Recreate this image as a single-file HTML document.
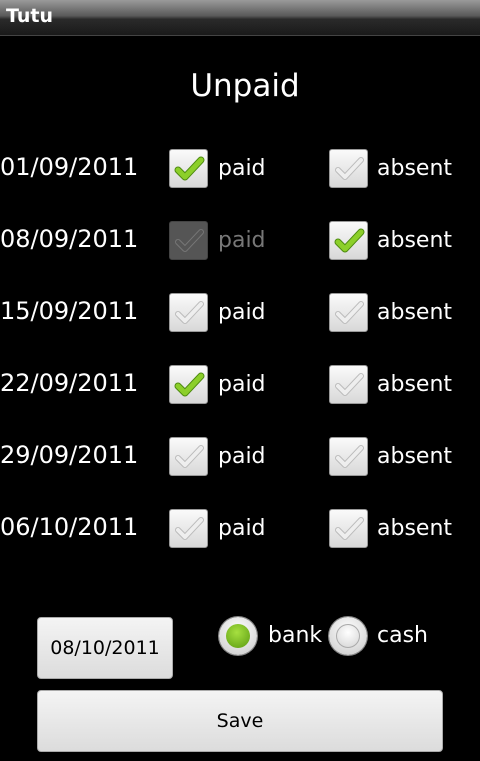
<!DOCTYPE html>
<html><head><meta charset="utf-8"><style>
body{margin:0;width:480px;height:761px;background:#000;position:relative;overflow:hidden;font-family:"DejaVu Sans","Liberation Sans",sans-serif;color:#fff}
.bar{position:absolute;left:0;top:0;width:480px;height:35px;background:linear-gradient(#9a9a9a,#5a5a5a 45%,#2a2a2a 55%,#1a1a1a);border-bottom:1px solid #444}
.bar span{position:absolute;left:6px;top:5px;font-weight:bold;font-size:19px}
.t{position:absolute;white-space:nowrap}
.cb{position:absolute;width:37px;height:37px;border:1px solid #999;border-radius:3px;background:linear-gradient(#fafafa,#d8d8d8)}
.cb.dis{background:#555;border-color:#444}
.cb svg{position:absolute;left:0;top:0}
.btn{position:absolute;border-radius:4px;background:linear-gradient(#f4f4f4,#dcdcdc);border:1px solid #aaa;color:#000;text-align:center}
.rad{position:absolute;width:38px;height:38px;border-radius:50%;background:radial-gradient(circle at 50% 35%,#fff,#c8c8c8);box-shadow:0 0 0 1px #888}
.rad i{position:absolute;left:7px;top:7px;width:24px;height:24px;border-radius:50%}
</style></head><body>
<div class="bar"><span>Tutu</span></div>
<div class="t" style="left:0;width:490px;text-align:center;top:68px;font-size:31px">Unpaid</div>
<div id="rows"></div>
<script>
var rows=[["01/09/2011","on","off"],["08/09/2011","dis","on"],["15/09/2011","off","off"],["22/09/2011","on","off"],["29/09/2011","off","off"],["06/10/2011","off","off"]];
function cb(x,y,s){var path='M8 20 L15 27 L31 10';var svg;
if(s=="on")svg='<svg width="37" height="37"><path d="'+path+'" stroke="#4d8a10" stroke-width="7" fill="none" stroke-linecap="round" stroke-linejoin="round"/><path d="'+path+'" stroke="#8ccf2a" stroke-width="5" fill="none" stroke-linecap="round" stroke-linejoin="round"/></svg>';
else svg='<svg width="37" height="37"><path d="'+path+'" stroke="'+(s=="dis"?"#777":"#bbb")+'" stroke-width="6" fill="none" stroke-linecap="round" stroke-linejoin="round"/><path d="'+path+'" stroke="'+(s=="dis"?"#555":"#eee")+'" stroke-width="4" fill="none" stroke-linecap="round" stroke-linejoin="round"/></svg>';
return '<div class="cb'+(s=="dis"?" dis":"")+'" style="left:'+x+'px;top:'+y+'px">'+svg+'</div>';}
var h='';rows.forEach(function(r,i){var y=149+72*i;
h+='<div class="t" style="left:0;top:'+(y+4)+'px;font-size:24px">'+r[0]+'</div>';
h+=cb(169,y,r[1]);h+='<div class="t" style="left:218px;top:'+(y+7)+'px;font-size:22px;color:'+(r[1]=="dis"?"#777":"#fff")+'">paid</div>';
h+=cb(329,y,r[2]);h+='<div class="t" style="left:377px;top:'+(y+7)+'px;font-size:22px">absent</div>';});
document.getElementById('rows').innerHTML=h;
</script>
<div class="btn" style="left:37px;top:617px;width:134px;height:60px;line-height:60px;font-size:19px">08/10/2011</div>
<div class="rad" style="left:219px;top:617px"><i style="background:radial-gradient(circle at 45% 35%,#a6e040,#5a9a10)"></i></div>
<div class="t" style="left:268px;top:623px;font-size:22px">bank</div>
<div class="rad" style="left:329px;top:617px"><i style="background:radial-gradient(circle at 50% 35%,#fff,#d0d0d0);box-shadow:inset 0 0 0 1px #aaa"></i></div>
<div class="t" style="left:377px;top:623px;font-size:22px">cash</div>
<div class="btn" style="left:37px;top:690px;width:404px;height:60px;line-height:60px;font-size:19px">Save</div>
</body></html>
